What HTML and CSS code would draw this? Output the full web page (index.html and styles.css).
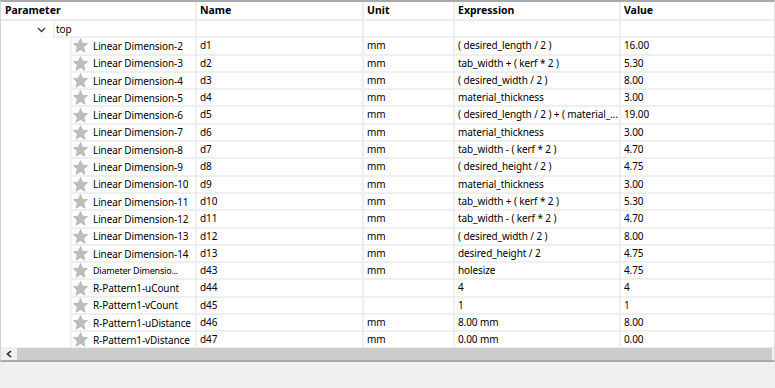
FILE: index.html
```html
<!DOCTYPE html>
<html lang="en">
<head>
    <meta charset="UTF-8" />
    <title>Parameters</title>
    <link rel="stylesheet" href="styles.css">
</head>
<body>

    <div class="panel">
        <div class="head">
            <div class="hcell">Parameter</div>
            <div class="hcell">Name</div>
            <div class="hcell">Unit</div>
            <div class="hcell">Expression</div>
            <div class="hcell">Value</div>
        </div>

        <div class="rows" id="rows">
            <div class="row">
                <div class="param">
                    <span class="twist">
                        <svg width="9" height="6" viewBox="0 0 9 6"><polyline points="1,1 4.5,4.5 8,1" fill="none" stroke="#333" stroke-width="1.3"/></svg>
                    </span>
                    <div class="label top">top</div>
                </div>
                <div class="cell"></div>
                <div class="cell"></div>
                <div class="cell"></div>
                <div class="cell"></div>
            </div>
        </div>

        <div class="hscroll">
            <div class="arrow">
                <svg width="6" height="8" viewBox="0 0 6 8"><polyline points="5,1 1.5,4 5,7" fill="none" stroke="#222" stroke-width="1.6"/></svg>
            </div>
            <div class="thumb"></div>
        </div>
    </div>

    <script>
        const params = [
            ['Linear Dimension-2', 'd1', 'mm', '( desired_length / 2 )', '16.00'],
            ['Linear Dimension-3', 'd2', 'mm', 'tab_width + ( kerf * 2 )', '5.30'],
            ['Linear Dimension-4', 'd3', 'mm', '( desired_width / 2 )', '8.00'],
            ['Linear Dimension-5', 'd4', 'mm', 'material_thickness', '3.00'],
            ['Linear Dimension-6', 'd5', 'mm', '( desired_length / 2 ) + ( material_...', '19.00'],
            ['Linear Dimension-7', 'd6', 'mm', 'material_thickness', '3.00'],
            ['Linear Dimension-8', 'd7', 'mm', 'tab_width - ( kerf * 2 )', '4.70'],
            ['Linear Dimension-9', 'd8', 'mm', '( desired_height / 2 )', '4.75'],
            ['Linear Dimension-10', 'd9', 'mm', 'material_thickness', '3.00'],
            ['Linear Dimension-11', 'd10', 'mm', 'tab_width + ( kerf * 2 )', '5.30'],
            ['Linear Dimension-12', 'd11', 'mm', 'tab_width - ( kerf * 2 )', '4.70'],
            ['Linear Dimension-13', 'd12', 'mm', '( desired_width / 2 )', '8.00'],
            ['Linear Dimension-14', 'd13', 'mm', 'desired_height / 2', '4.75'],
            ['Diameter Dimensio...', 'd43', 'mm', 'holesize', '4.75', 'small'],
            ['R-Pattern1-uCount', 'd44', '', '4', '4'],
            ['R-Pattern1-vCount', 'd45', '', '1', '1'],
            ['R-Pattern1-uDistance', 'd46', 'mm', '8.00 mm', '8.00'],
            ['R-Pattern1-vDistance', 'd47', 'mm', '0.00 mm', '0.00']
        ];

        const star = '<svg class="star" width="15" height="15" viewBox="0 0 14 14">' +
            '<polygon points="7,0.5 8.9,4.8 13.6,5.2 10,8.4 11.1,13.3 7,10.7 2.9,13.3 4,8.4 0.4,5.2 5.1,4.8" fill="#bdbdbd" stroke="#acacac" stroke-width="0.6" stroke-linejoin="round"/></svg>';

        const container = document.getElementById('rows');
        params.forEach(p => {
            const row = document.createElement('div');
            row.className = 'row';
            row.innerHTML = `
                <div class="param">
                    <div class="label child">${star}<span class="${p[5] || ''}">${p[0]}</span></div>
                </div>
                <div class="cell">${p[1]}</div>
                <div class="cell">${p[2]}</div>
                <div class="cell">${p[3]}</div>
                <div class="cell">${p[4]}</div>
            `;
            container.appendChild(row);
        });
    </script>

</body>
</html>
```

FILE: styles.css
```css
body {
    font-family: 'Noto Sans', 'Open Sans', sans-serif;
    font-size: 10px;
    letter-spacing: -0.1px;
    margin: 0;
    padding: 0;
    background-color: #f0f0f0;
    color: #000;
    width: 775px;
    height: 388px;
    overflow: hidden;
}
.panel {
    width: 775px;
    height: 362px;
    box-sizing: border-box;
    border-top: 2px solid #a6aaae;
    border-left: 1px solid #d4d4d4;
    border-right: 1px solid #e2e2e2;
    border-bottom: 2px solid #a9acaf;
    background-color: #ffffff;
    display: flex;
    flex-direction: column;
}
.head, .row {
    display: grid;
    grid-template-columns: 194px 167px 91px 166px 1fr;
}
.head {
    height: 19px;
    box-sizing: border-box;
    border-bottom: 2px solid #ececec;
}
.hcell {
    font-weight: bold;
    font-size: 10.5px;
    letter-spacing: 0;
    line-height: 17px;
    padding-left: 3px;
    border-left: 2px solid #ededed;
    white-space: nowrap;
}
.hcell:first-child {
    border-left: none;
    padding-left: 4px;
}
.rows {
    flex: 1;
    overflow: hidden;
}
.row {
    height: 17.3px;
}
.cell {
    border-left: 2px solid #efefef;
    border-bottom: 2px solid #efefef;
    padding-left: 3px;
    line-height: 15px;
    white-space: nowrap;
}
.param {
    display: flex;
    align-items: stretch;
}
.twist {
    width: 52px;
    display: flex;
    align-items: center;
    justify-content: flex-end;
    padding-right: 7px;
    box-sizing: border-box;
    padding-top: 1px;
}
.label {
    flex: 1;
    border-left: 2px solid #efefef;
    border-bottom: 2px solid #efefef;
    display: flex;
    align-items: center;
    white-space: nowrap;
    overflow: hidden;
}
.label.top {
    padding-left: 1px;
}
.label.child {
    margin-left: 69px;
    padding-left: 1px;
    gap: 5px;
}
.star {
    flex: none;
}
.small {
    font-size: 9px;
    letter-spacing: -0.2px;
}
.hscroll {
    height: 13px;
    display: flex;
    background-color: #f0f0f0;
}
.arrow {
    width: 16px;
    display: flex;
    align-items: center;
    justify-content: center;
}
.thumb {
    flex: 1;
    background-color: #cdcdcd;
    margin: 1px 2px 0 0;
}
```
